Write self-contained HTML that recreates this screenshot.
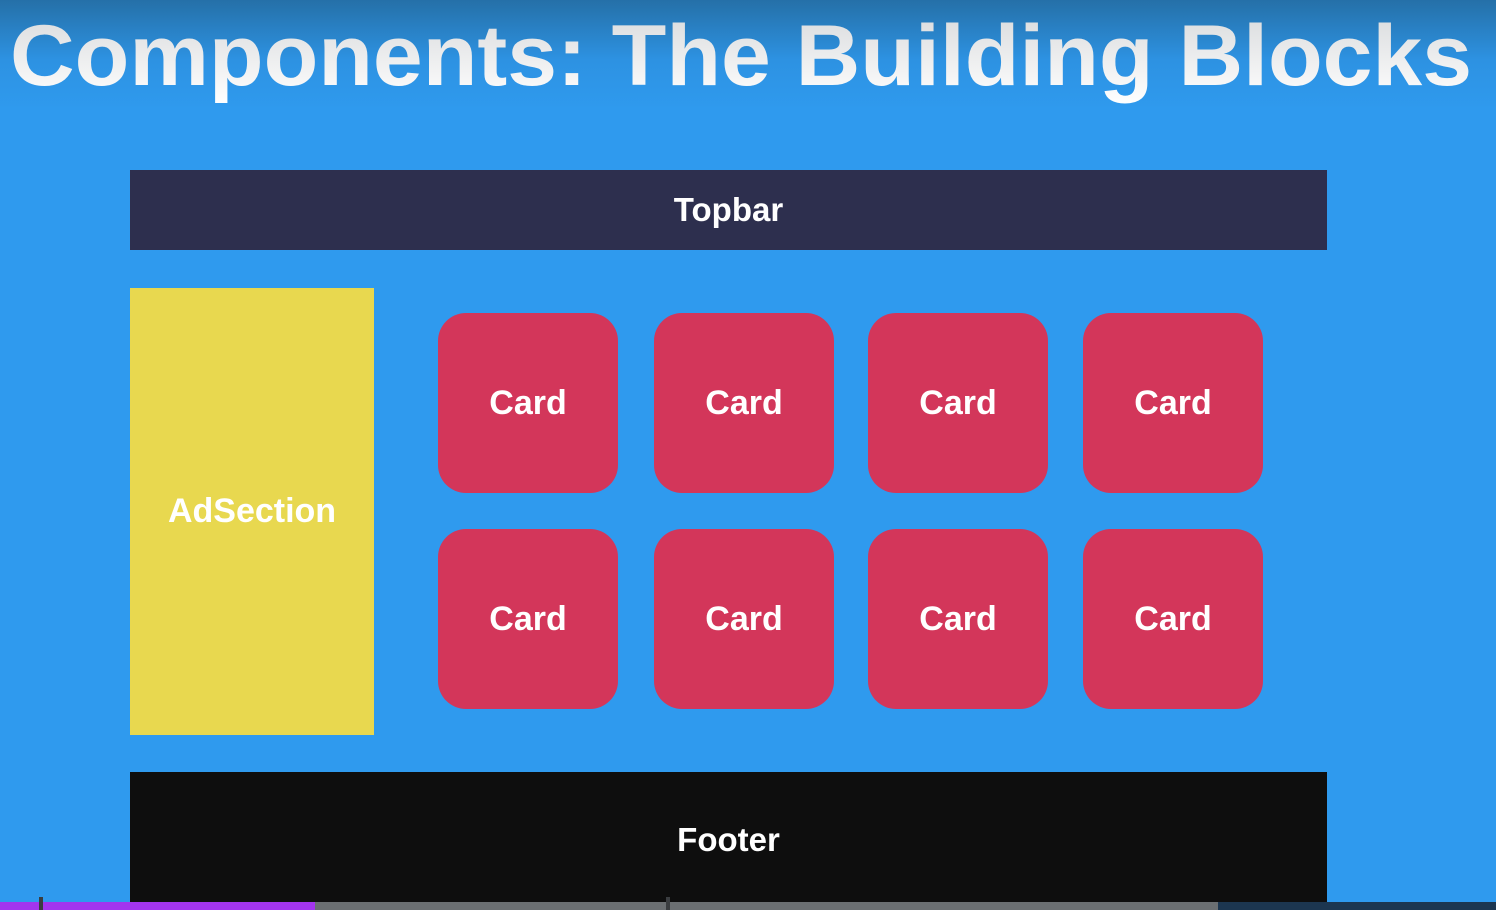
<!DOCTYPE html>
<html><head><style>
html,body{margin:0;padding:0}
body{width:1496px;height:910px;position:relative;overflow:hidden;background:linear-gradient(#2570a8 0px,#2d92e2 60px,#2f9aee 110px,#2f9aee 910px);font-family:"Liberation Sans",sans-serif}
.b{position:absolute;display:flex;align-items:center;justify-content:center;color:#fff;font-weight:bold;font-size:34px}
.c{background:#d3365a;border-radius:28px;width:180px;height:180px}
</style></head><body>
<svg style="position:absolute;left:0;top:0" width="1496" height="120"><defs><linearGradient id="g" x1="0" y1="0" x2="0" y2="1"><stop offset="0" stop-color="#d8dadc"/><stop offset="1" stop-color="#ffffff"/></linearGradient></defs>
<text x="10" y="85" textLength="1462" lengthAdjust="spacingAndGlyphs" font-family="Liberation Sans" font-weight="bold" font-size="86" fill="url(#g)">Components: The Building Blocks</text></svg>
<div class="b" style="left:130px;top:170px;width:1197px;height:80px;background:#2d2f4e;font-size:33px">Topbar</div>
<div class="b" style="left:130px;top:288px;width:244px;height:447px;background:#e8d84f">AdSection</div>
<div class="b c" style="left:438px;top:313px">Card</div>
<div class="b c" style="left:654px;top:313px">Card</div>
<div class="b c" style="left:868px;top:313px">Card</div>
<div class="b c" style="left:1083px;top:313px">Card</div>
<div class="b c" style="left:438px;top:529px">Card</div>
<div class="b c" style="left:654px;top:529px">Card</div>
<div class="b c" style="left:868px;top:529px">Card</div>
<div class="b c" style="left:1083px;top:529px">Card</div>
<div class="b" style="left:130px;top:772px;width:1197px;height:138px;background:#0e0e0e;font-size:33px"><span style="position:relative;top:-1px">Footer</span></div>
<div style="position:absolute;left:0;top:902px;width:315px;height:8px;background:#a335ee"></div>
<div style="position:absolute;left:315px;top:902px;width:903px;height:8px;background:#6b6f72"></div>
<div style="position:absolute;left:1218px;top:902px;width:278px;height:8px;background:#1c3650"></div>
<div style="position:absolute;left:39px;top:897px;width:4px;height:13px;background:#3a3d40"></div>
<div style="position:absolute;left:666px;top:897px;width:4px;height:13px;background:#3a3d40"></div>
</body></html>
